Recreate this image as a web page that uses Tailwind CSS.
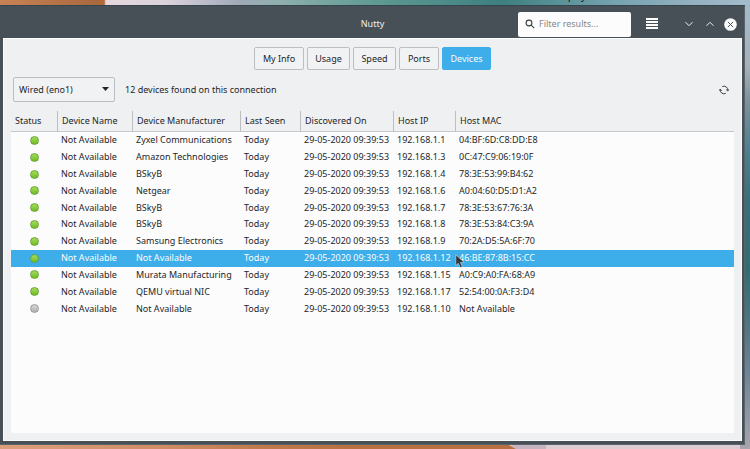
<!DOCTYPE html>
<html lang="en">
<head>
<meta charset="utf-8">
<title>Nutty</title>
<script src="https://cdn.jsdelivr.net/npm/@tailwindcss/browser@4"></script>
</head>
<body class="relative flex h-screen flex-col overflow-hidden bg-[#8fa3ad] pt-[5px] pr-[5px] pb-1 font-['Noto_Sans','Open_Sans',sans-serif] text-[9px] leading-4 text-[#232629]">
  <!-- Wallpaper -->
  <svg class="absolute inset-0 h-full w-full" viewBox="0 0 750 449" preserveAspectRatio="none" aria-hidden="true">
    <defs>
      <linearGradient id="top" x1="0" x2="1" y1="0" y2="0">
        <stop offset="0" stop-color="#c98255"/><stop offset=".13" stop-color="#a9683e"/><stop offset=".139" stop-color="#b4693a"/>
        <stop offset=".141" stop-color="#e6d8dd"/><stop offset=".22" stop-color="#dcd3dc"/><stop offset=".32" stop-color="#a0a9b8"/>
        <stop offset=".37" stop-color="#8fb0ae"/><stop offset=".5" stop-color="#5f9a92"/><stop offset=".67" stop-color="#3d8080"/>
        <stop offset=".82" stop-color="#75a3b0"/><stop offset=".92" stop-color="#93b0c0"/><stop offset="1" stop-color="#a3bccb"/>
      </linearGradient>
      <linearGradient id="bottom" x1="0" x2="1" y1="0" y2="0">
        <stop offset="0" stop-color="#dc9f7c"/><stop offset=".3" stop-color="#d08d66"/><stop offset=".5" stop-color="#c07a4c"/><stop offset=".69" stop-color="#b87040"/>
      </linearGradient>
      <linearGradient id="side" x1="0" x2="0" y1="0" y2="1">
        <stop offset="0" stop-color="#a3bccb"/><stop offset=".15" stop-color="#a6b0ba"/><stop offset=".22" stop-color="#7d949c"/>
        <stop offset=".33" stop-color="#4f7f94"/><stop offset=".45" stop-color="#35707f"/><stop offset=".6" stop-color="#2f6d75"/>
        <stop offset=".75" stop-color="#54788a"/><stop offset=".85" stop-color="#74889b"/><stop offset="1" stop-color="#a8a5ad"/>
      </linearGradient>
    </defs>
    <rect width="750" height="6" fill="url(#top)"/>
    <rect x="740" y="0" width="10" height="449" fill="url(#side)"/>
    <rect y="440" width="740" height="9" fill="#dccdd3"/>
    <path d="M504 440h42v9h-30z" fill="#c5b3c0"/>
    <path d="M0 440h500l16 9H0z" fill="url(#bottom)"/>
  </svg>
  <!-- Desktop icon label, mostly beyond the top edge -->
  <span class="absolute -top-[11px] left-[568px] text-[9px] text-black">player</span>

  <main class="relative flex flex-1 flex-col border-t border-[#36444e] bg-[#475057] pr-[3px] pb-1 pl-[3px] shadow-[inset_-1px_-1px_0_#59636a]">
    <header class="grid h-8 shrink-0 grid-cols-[1fr_auto_1fr] items-center">
      <span></span>
      <h1 class="pt-1 text-[#eff0f1]">Nutty</h1>
      <div class="flex items-center justify-end pt-1 pr-[5px]">
        <label class="flex h-[25px] w-[113px] items-center gap-1 rounded-xs bg-[#fcfcfc] px-[7px]">
          <svg class="h-[10px] w-[10px] shrink-0" viewBox="0 0 10 10" fill="none" stroke="#3a3f43" stroke-width="1.1" aria-hidden="true"><circle cx="4" cy="4" r="2.9"/><path d="M6.2 6.2L9.2 9.2"/></svg>
          <input type="search" aria-label="Filter results" placeholder="Filter results..." class="min-w-0 flex-1 bg-transparent outline-none placeholder:text-[#85888a]">
        </label>
        <button aria-label="Menu" class="ml-[14px] flex h-6 w-[14px] items-center justify-center">
          <svg class="h-3 w-3 shrink-0" viewBox="0 0 12 12" fill="#fcfcfc" aria-hidden="true"><path d="M0 0h12v2H0zM0 3h12v2H0zM0 6h12v2H0zM0 9h12v2H0z"/></svg>
        </button>
        <button aria-label="Minimize" class="ml-6 flex h-6 w-[11px] items-center justify-center">
          <svg class="h-2 w-2" viewBox="0 0 8 8" fill="none" stroke="#eff0f1" aria-hidden="true"><path d="M.5 2.200L4 5.700l3.500-3.500"/></svg>
        </button>
        <button aria-label="Maximize" class="ml-[10px] flex h-6 w-[11px] items-center justify-center">
          <svg class="h-2 w-2" viewBox="0 0 8 8" fill="none" stroke="#eff0f1" aria-hidden="true"><path d="M.5 5.800L4 2.300l3.500 3.500"/></svg>
        </button>
        <button aria-label="Close" class="ml-[9px] flex h-6 w-[13px] items-center justify-center">
          <svg class="h-[13px] w-[13px]" viewBox="0 0 13 13" aria-hidden="true"><circle cx="6.500" cy="6.500" r="6.300" fill="#fcfcfc"/><path d="M3.900 3.900l5.200 5.200M9.100 3.900l-5.200 5.200" stroke="#475057" fill="none"/></svg>
        </button>
      </div>
    </header>

    <section class="flex flex-1 flex-col border border-[#fcfcfc] bg-[#eff0f1] px-[7px] pt-2 pb-[7px]">
      <nav class="flex justify-center gap-[3px]" aria-label="Views">
        <button class="h-[23px] w-[50px] rounded-xs border border-[#bcbebf] bg-[#f1f2f3]">My Info</button>
        <button class="h-[23px] w-[43px] rounded-xs border border-[#bcbebf] bg-[#f1f2f3]">Usage</button>
        <button class="h-[23px] w-[43px] rounded-xs border border-[#bcbebf] bg-[#f1f2f3]">Speed</button>
        <button class="h-[23px] w-[40px] rounded-xs border border-[#bcbebf] bg-[#f1f2f3]">Ports</button>
        <button class="h-[23px] w-[49px] rounded-xs border border-[#3daee9] bg-[#3daee9] text-[#fcfcfc]" aria-current="page">Devices</button>
      </nav>

      <div class="mt-[7px] flex items-center pr-[5px] pl-[2px]">
        <div class="relative">
          <select aria-label="Connection" class="block h-[25px] w-[102px] appearance-none rounded-xs border border-[#bcbebf] bg-[#f1f2f3] pr-5 pl-[5px]"><option>Wired (eno1)</option></select>
          <svg class="pointer-events-none absolute top-[10px] right-[6px] h-1 w-[7px]" viewBox="0 0 7 4" fill="#232629" aria-hidden="true"><path d="M0 0h7L3.500 4z"/></svg>
        </div>
        <p class="ml-[10px]">12 devices found on this connection</p>
        <button aria-label="Refresh" class="ml-auto">
          <svg class="h-[10px] w-[10px]" viewBox="0 0 10 10" fill="none" stroke="#3a3f43" aria-hidden="true"><path d="M3.300 1.600A3.800 3.800 0 0 1 8.800 5.500M6.700 8.400A3.800 3.800 0 0 1 1.200 4.500"/><path d="M7.200 4.500l1.600 1.500L10 4.300M0 5.700l1.200-1.500 1.600 1.500"/></svg>
        </button>
      </div>

      <div class="mt-[9px] flex-1 bg-[linear-gradient(#eff0f1_21px,#fcfcfc_21px)]">
        <table class="h-[206px] w-full table-fixed border-separate border-spacing-0 text-left whitespace-nowrap">
          <colgroup><col class="w-[47px]"><col class="w-[75px]"><col class="w-[108px]"><col class="w-[60px]"><col class="w-[93px]"><col class="w-[62px]"><col></colgroup>
          <thead>
            <tr class="h-[21px] *:border-b *:border-b-[#c6c8c9] *:p-0 *:pl-1 *:font-normal">
              <th class="border-r border-r-[#bcbebf]">Status</th>
              <th class="border-r border-r-[#bcbebf]">Device Name</th>
              <th class="border-r border-r-[#bcbebf]">Device Manufacturer</th>
              <th class="border-r border-r-[#bcbebf]">Last Seen</th>
              <th class="border-r border-r-[#bcbebf]">Discovered On</th>
              <th class="border-r border-r-[#bcbebf]">Host IP</th>
              <th>Host MAC</th>
            </tr>
          </thead>
          <tbody id="devices" class="[&_td]:p-0 [&_td]:pl-[3px] [&_td:first-child]:pl-0"></tbody>
        </table>
      </div>
    </section>
  </main>

  <!-- Pointer -->
  <svg class="pointer-events-none absolute top-[254px] left-[455px] h-[15px] w-[10px]" viewBox="0 0 10 15" aria-hidden="true"><path d="M.8.8v10.700l2.500-2.200 2 4.300 2-1-1.900-4.100 3.700-.3z" fill="#31363b" stroke="#d5dde2" stroke-width=".6"/></svg>

  <script>
    const devices = [
      ["Zyxel Communications", "192.168.1.1", "04:BF:6D:C8:DD:E8"],
      ["Amazon Technologies", "192.168.1.3", "0C:47:C9:06:19:0F"],
      ["BSkyB", "192.168.1.4", "78:3E:53:99:B4:62"],
      ["Netgear", "192.168.1.6", "A0:04:60:D5:D1:A2"],
      ["BSkyB", "192.168.1.7", "78:3E:53:67:76:3A"],
      ["BSkyB", "192.168.1.8", "78:3E:53:84:C3:9A"],
      ["Samsung Electronics", "192.168.1.9", "70:2A:D5:5A:6F:70"],
      ["Not Available", "192.168.1.12", "46:BE:87:8B:15:CC"],
      ["Murata Manufacturing", "192.168.1.15", "A0:C9:A0:FA:68:A9"],
      ["QEMU virtual NIC", "192.168.1.17", "52:54:00:0A:F3:D4"],
      ["Not Available", "192.168.1.10", "Not Available"],
    ];
    const online = "mx-auto block h-[9px] w-[9px] rounded-full border border-[#6aa332] bg-linear-to-b from-[#a5dd5c] to-[#6fbb22]";
    const offline = "mx-auto block h-[9px] w-[9px] rounded-full border border-[#999999] bg-linear-to-b from-[#d8d8d8] to-[#b0b0b0]";
    document.getElementById("devices").innerHTML = devices.map(([maker, ip, mac], i) => `
      <tr class="${i === 7 ? "bg-[#3daee9] text-[#fcfcfc]" : ""}">
        <td><span class="${i === 10 ? offline : online}" role="img" aria-label="${i === 10 ? "Offline" : "Online"}"></span></td>
        <td>Not Available</td><td>${maker}</td><td>Today</td><td>29-05-2020 09:39:53</td><td>${ip}</td><td>${mac}</td>
      </tr>`).join("");
  </script>
</body>
</html>
